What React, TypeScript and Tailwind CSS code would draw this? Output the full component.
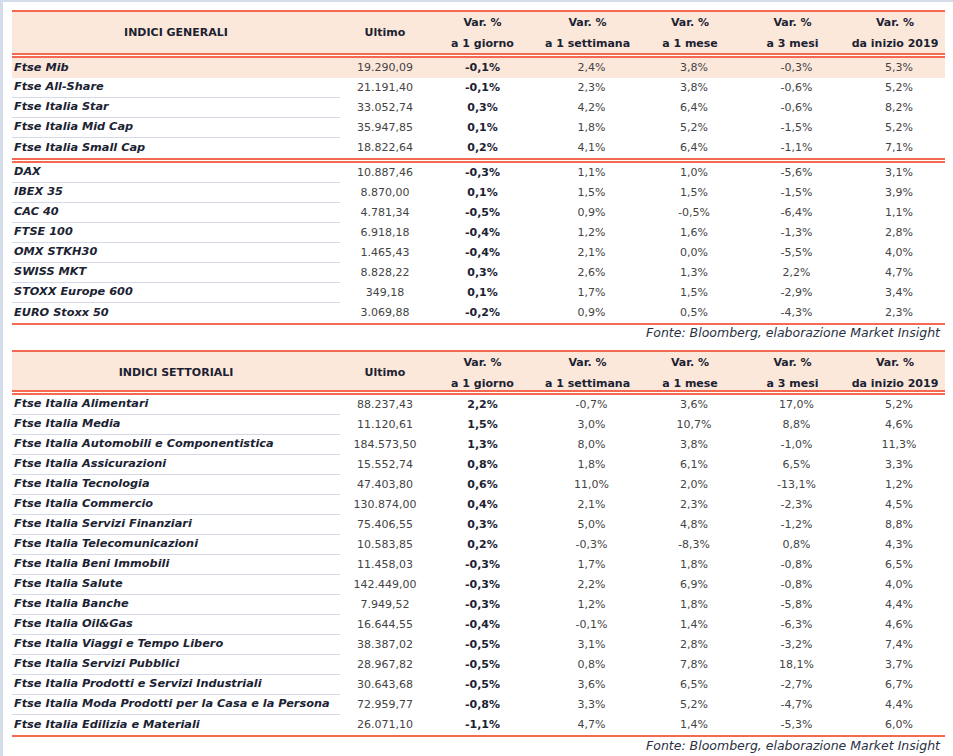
const generali1 = [
  ["Ftse Mib", "19.290,09", "-0,1%", "2,4%", "3,8%", "-0,3%", "5,3%"],
  ["Ftse All-Share", "21.191,40", "-0,1%", "2,3%", "3,8%", "-0,6%", "5,2%"],
  ["Ftse Italia Star", "33.052,74", "0,3%", "4,2%", "6,4%", "-0,6%", "8,2%"],
  ["Ftse Italia Mid Cap", "35.947,85", "0,1%", "1,8%", "5,2%", "-1,5%", "5,2%"],
  ["Ftse Italia Small Cap", "18.822,64", "0,2%", "4,1%", "6,4%", "-1,1%", "7,1%"],
];

const generali2 = [
  ["DAX", "10.887,46", "-0,3%", "1,1%", "1,0%", "-5,6%", "3,1%"],
  ["IBEX 35", "8.870,00", "0,1%", "1,5%", "1,5%", "-1,5%", "3,9%"],
  ["CAC 40", "4.781,34", "-0,5%", "0,9%", "-0,5%", "-6,4%", "1,1%"],
  ["FTSE 100", "6.918,18", "-0,4%", "1,2%", "1,6%", "-1,3%", "2,8%"],
  ["OMX STKH30", "1.465,43", "-0,4%", "2,1%", "0,0%", "-5,5%", "4,0%"],
  ["SWISS MKT", "8.828,22", "0,3%", "2,6%", "1,3%", "2,2%", "4,7%"],
  ["STOXX Europe 600", "349,18", "0,1%", "1,7%", "1,5%", "-2,9%", "3,4%"],
  ["EURO Stoxx 50", "3.069,88", "-0,2%", "0,9%", "0,5%", "-4,3%", "2,3%"],
];

const settoriali = [
  ["Ftse Italia Alimentari", "88.237,43", "2,2%", "-0,7%", "3,6%", "17,0%", "5,2%"],
  ["Ftse Italia Media", "11.120,61", "1,5%", "3,0%", "10,7%", "8,8%", "4,6%"],
  ["Ftse Italia Automobili e Componentistica", "184.573,50", "1,3%", "8,0%", "3,8%", "-1,0%", "11,3%"],
  ["Ftse Italia Assicurazioni", "15.552,74", "0,8%", "1,8%", "6,1%", "6,5%", "3,3%"],
  ["Ftse Italia Tecnologia", "47.403,80", "0,6%", "11,0%", "2,0%", "-13,1%", "1,2%"],
  ["Ftse Italia Commercio", "130.874,00", "0,4%", "2,1%", "2,3%", "-2,3%", "4,5%"],
  ["Ftse Italia Servizi Finanziari", "75.406,55", "0,3%", "5,0%", "4,8%", "-1,2%", "8,8%"],
  ["Ftse Italia Telecomunicazioni", "10.583,85", "0,2%", "-0,3%", "-8,3%", "0,8%", "4,3%"],
  ["Ftse Italia Beni Immobili", "11.458,03", "-0,3%", "1,7%", "1,8%", "-0,8%", "6,5%"],
  ["Ftse Italia Salute", "142.449,00", "-0,3%", "2,2%", "6,9%", "-0,8%", "4,0%"],
  ["Ftse Italia Banche", "7.949,52", "-0,3%", "1,2%", "1,8%", "-5,8%", "4,4%"],
  ["Ftse Italia Oil&Gas", "16.644,55", "-0,4%", "-0,1%", "1,4%", "-6,3%", "4,6%"],
  ["Ftse Italia Viaggi e Tempo Libero", "38.387,02", "-0,5%", "3,1%", "2,8%", "-3,2%", "7,4%"],
  ["Ftse Italia Servizi Pubblici", "28.967,82", "-0,5%", "0,8%", "7,8%", "18,1%", "3,7%"],
  ["Ftse Italia Prodotti e Servizi Industriali", "30.643,68", "-0,5%", "3,6%", "6,5%", "-2,7%", "6,7%"],
  ["Ftse Italia Moda Prodotti per la Casa e la Persona", "72.959,77", "-0,8%", "3,3%", "5,2%", "-4,7%", "4,4%"],
  ["Ftse Italia Edilizia e Materiali", "26.071,10", "-1,1%", "4,7%", "1,4%", "-5,3%", "6,0%"],
];

const cols = "grid grid-cols-[328px_90px_105px_105px_100px_105px_100px]";

function Header({ title, tall }: { title: string; tall?: boolean }) {
  const sub = ["a 1 giorno", "a 1 settimana", "a 1 mese", "a 3 mesi", "da inizio 2019"];
  return (
    <>
      <div className="h-[2px] bg-[#f4694f]" />
      <div
        className={`${cols} ${tall ? "h-[41px]" : "h-[38px]"} bg-[#fce8da] font-bold text-[11px] text-[#1b2232]`}
      >
        <div className="flex items-center justify-center">{title}</div>
        <div className="flex items-center justify-center">Ultimo</div>
        {sub.map((s) => (
          <div key={s} className="flex flex-col items-center justify-center leading-[21px]">
            <span>Var. %</span>
            <span>{s}</span>
          </div>
        ))}
      </div>
      <DoubleLine />
    </>
  );
}

function DoubleLine() {
  return <div className="h-[5px] border-y-2 border-[#f4694f] bg-white" />;
}

function Rows({ rows, highlightFirst }: { rows: string[][]; highlightFirst?: boolean }) {
  return (
    <div>
      {rows.map((r, i) => {
        const last = i === rows.length - 1;
        const hl = highlightFirst && i === 0;
        return (
          <div key={r[0]} className={`${cols} h-[20px] text-[11px] ${hl ? "bg-[#fce8da]" : ""}`}>
            <div
              className={`flex items-center pl-[2px] text-[11.3px] font-bold italic text-[#1b2232] ${
                last || hl ? "" : "border-b border-[#d3d9e6]"
              }`}
            >
              {r[0]}
            </div>
            <div className="flex items-center justify-center text-[#444]">{r[1]}</div>
            <div className="flex items-center justify-center font-bold text-[#1b2232]">{r[2]}</div>
            {r.slice(3).map((v, j) => (
              <div key={j} className="flex items-center justify-center pl-2 text-[#444]">
                {v}
              </div>
            ))}
          </div>
        );
      })}
    </div>
  );
}

function Fonte() {
  return (
    <div className="flex justify-end pr-[5px] text-[12.5px] italic leading-[16px] text-[#2a3142]">
      Fonte: Bloomberg, elaborazione Market Insight
    </div>
  );
}

export default function App() {
  return (
    <div
      className="w-[953px] h-[756px] overflow-hidden bg-white border-l-[3px] border-t-2 border-[#d5dce9] pl-[9px] pr-[8px] pt-2"
      style={{ fontFamily: '"DejaVu Sans", sans-serif' }}
    >
      <Header title="INDICI GENERALI" tall />
      <Rows rows={generali1} highlightFirst />
      <DoubleLine />
      <Rows rows={generali2} />
      <div className="h-[2px] bg-[#f4694f]" />
      <div className="h-[25px]">
        <Fonte />
      </div>

      <Header title="INDICI SETTORIALI" />
      <Rows rows={settoriali} />
      <div className="h-[2px] bg-[#f4694f]" />
      <div className="pt-[1px]">
        <Fonte />
      </div>
    </div>
  );
}
